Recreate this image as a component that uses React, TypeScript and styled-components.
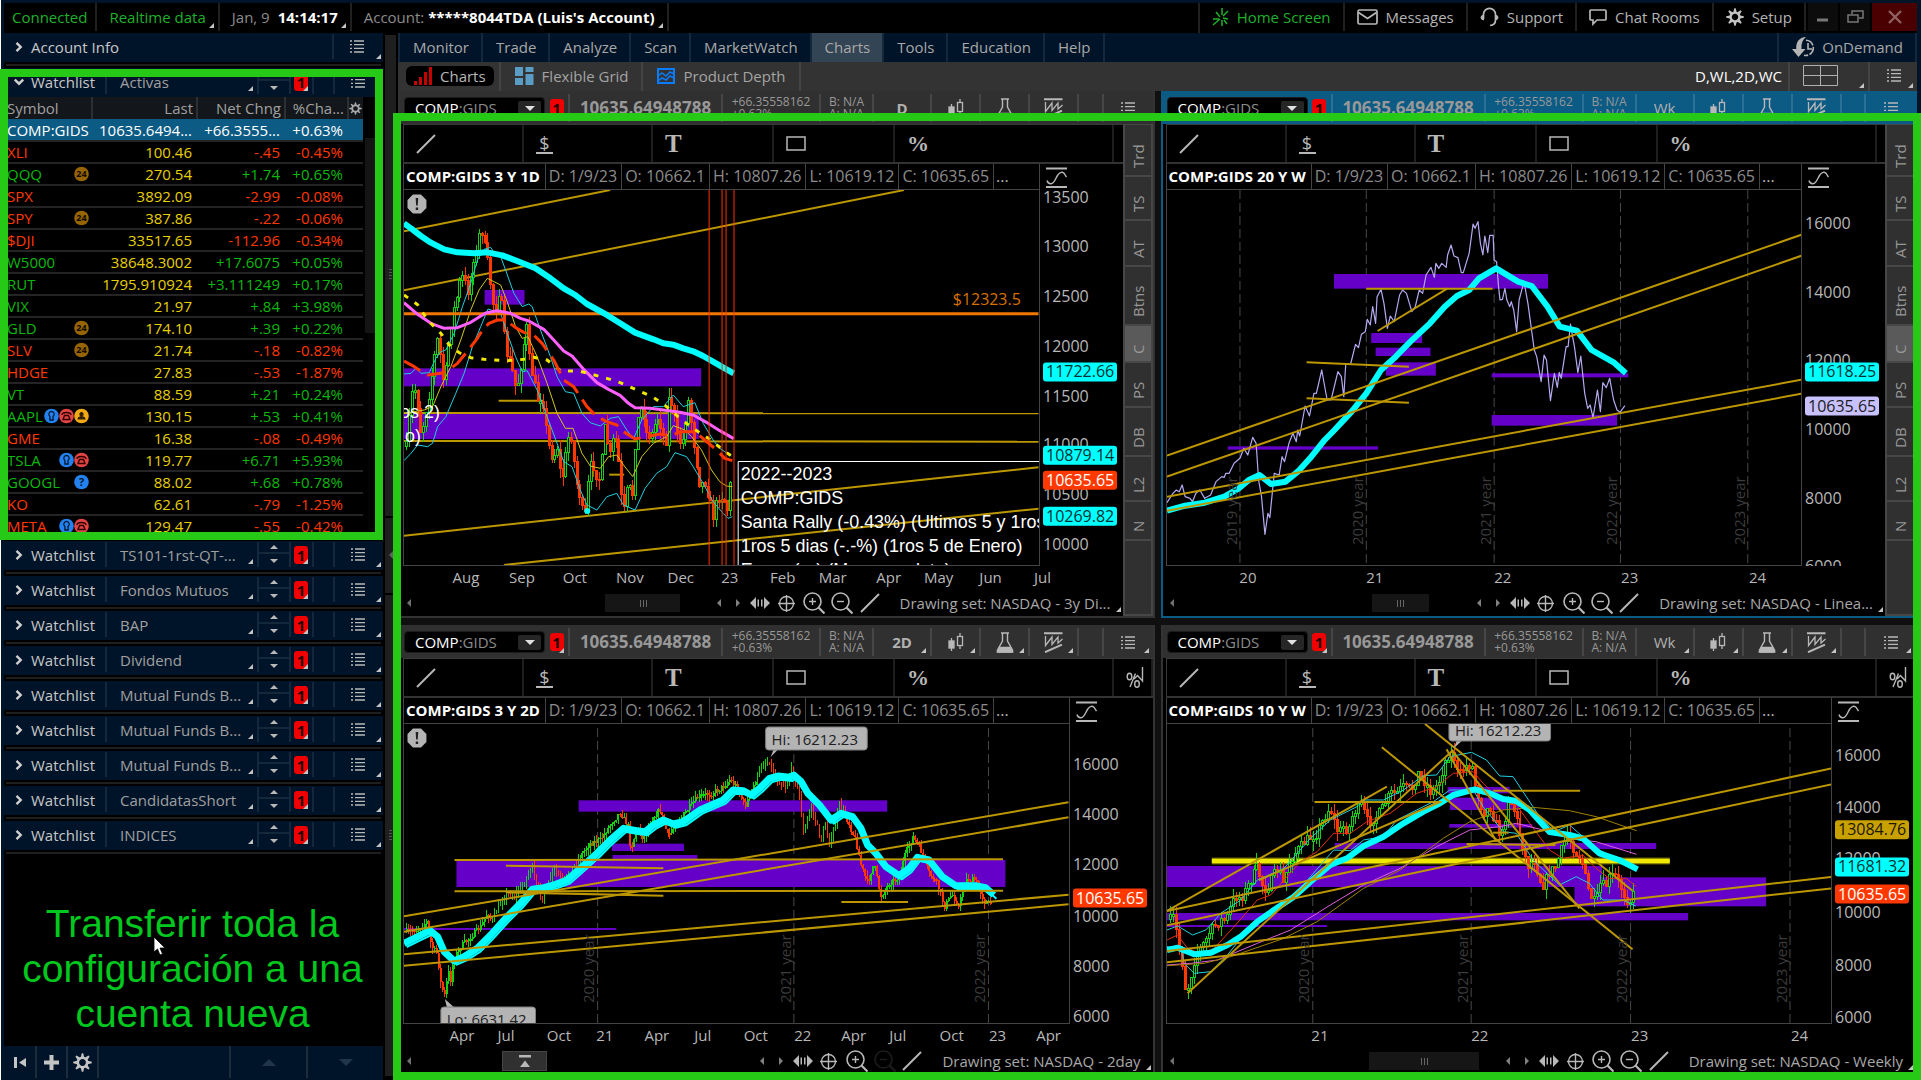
import React from "react";
import styled, { createGlobalStyle, css } from "styled-components";

const SANS = '"Open Sans", "Noto Sans", sans-serif';
const ARIAL = '"Liberation Sans", Arial, sans-serif';
const NAVY = "#001429";
const GREEN = "#26c916";
const GOLD = "#bd9700";
const PURPLE = "#6400c8";
const CYAN = "#00ffff";
const RED = "#ff3800";
const ICON = "#b8b8b8";

const Global = createGlobalStyle`
  * { box-sizing: border-box; }
  body { margin: 0; background: ${NAVY}; overflow: hidden; }
  button { font: inherit; color: inherit; background: none; border: 0; padding: 0; margin: 0; cursor: pointer; text-align: left; }
  svg { display: block; flex: none; }
`;

const App_ = styled.div`
  height: 100vh;
  display: flex;
  flex-direction: column;
  padding: 3px 4px 0 3px;
  border-left: 1px solid #fff;
  background: ${NAVY};
  color: #b4b4b4;
  font: 15px/20px ${SANS};
`;

const corner = css`
  position: relative;
  &::after {
    content: "";
    position: absolute;
    right: 4px;
    bottom: 3px;
    border-left: 5px solid transparent;
    border-bottom: 5px solid #c4c4c4;
  }
`;

/* ---------- top bar ---------- */
const TopBar = styled.header`
  display: flex;
  height: 30px;
  background: #000;
`;
const TopItem = styled.button<{ $green?: boolean; $corner?: boolean; $first?: boolean }>`
  display: flex;
  align-items: center;
  gap: 8px;
  height: 28px;
  padding: ${(p) => (p.$first ? "0 8px" : "0 12px")};
  border-right: 2px solid #202020;
  white-space: nowrap;
  color: ${(p) => (p.$green ? "#1fb02a" : "#b4b4b4")};
  ${(p) => p.$corner && corner}
`;
const Dim = styled.span`
  color: #8c8c8c;
`;
const Strong = styled.b`
  color: #fff;
`;
const Spacer = styled.div<{ $line?: string }>`
  flex: 1;
  border-right: ${(p) => (p.$line ? `2px solid ${p.$line}` : "0")};
`;
const WinButton = styled.button<{ $close?: boolean }>`
  display: grid;
  place-items: center;
  width: ${(p) => (p.$close ? 45 : 30)}px;
  height: 28px;
  margin-left: 2px;
  background: ${(p) => (p.$close ? "#4a0000" : "#0c0c0c")};
`;

/* ---------- body ---------- */
const Body = styled.div`
  flex: 1;
  min-height: 0;
  display: flex;
`;
const Side = styled.aside`
  width: 379px;
  flex: none;
  display: flex;
  flex-direction: column;
  background: #000;
`;
const Row = styled.div`
  height: 29px;
  flex: none;
  display: flex;
  align-items: center;
  padding-bottom: 2px;
  background: ${NAVY};
`;
const RowGap = styled.div`
  height: 6px;
  flex: none;
  padding: 2px 2px 0;
  &::before {
    content: "";
    display: block;
    height: 2px;
    background: #1f1f1f;
  }
`;
const cellLine = css`
  height: 25px;
  border-right: 2px solid #14283c;
`;
const Toggle = styled.button`
  display: flex;
  align-items: center;
  gap: 7px;
  padding-left: 10px;
  width: 103px;
  color: #c8c8c8;
  ${cellLine}
`;
const AccountToggle = styled(Toggle)`
  width: 330px;
`;
const NameCell = styled.button`
  width: 152px;
  padding-left: 13px;
  color: #a0a0a0;
  white-space: nowrap;
  ${cellLine}
  ${corner}
`;
const SpinCell = styled.div`
  width: 32px;
  display: grid;
  place-items: center;
  ${cellLine}
`;
const Spin = styled.button`
  display: grid;
  place-items: center;
  width: 30px;
  height: 12px;
  &:first-child {
    border-bottom: 2px solid #14283c;
  }
`;
const LinkCell = styled.button`
  width: 23px;
  display: flex;
  align-items: center;
  padding-left: 3px;
  ${cellLine}
  ${corner}
`;
const LinkBadge = styled.span`
  width: 14px;
  height: 18px;
  border-radius: 3px;
  background: #f00000;
  color: #200000;
  font: bold 15px/18px ${SANS};
  text-align: center;
`;
const BlankCell = styled.div`
  width: 21px;
  ${cellLine}
`;
const MenuCell = styled.button`
  flex: 1;
  height: 27px;
  display: flex;
  align-items: center;
  padding-left: 16px;
  ${corner}
  &::after {
    right: 2px;
    bottom: 1px;
  }
`;
const Framed = styled.section`
  position: relative;
  padding-bottom: 3px;
`;
const Frame = styled.div<{ $side?: boolean }>`
  position: absolute;
  inset: ${(p) => (p.$side ? "1px 0 1px -4px" : "22px -4px -4px -5px")};
  border: 8px solid ${GREEN};
  pointer-events: none;
  z-index: 2;
`;
const QuoteWrap = styled.div`
  display: flex;
`;
const Quotes = styled.table`
  flex: 1;
  table-layout: fixed;
  border-collapse: collapse;
`;
const Th = styled.th<{ $w: number; $left?: boolean }>`
  width: ${(p) => p.$w}px;
  height: 22px;
  padding: 0 3px;
  font-weight: 400;
  color: #a0a0a0;
  background: #13171b;
  border-right: 2px solid #2c3034;
  text-align: ${(p) => (p.$left ? "left" : "right")};
  &:last-child {
    border-right: 0;
    padding: 0;
  }
`;
const Tr = styled.tr<{ $on?: boolean }>`
  height: 22px;
  background: ${(p) => (p.$on ? "#0c5b84" : "#000")};
  border-bottom: 2px solid #242424;
`;
const tones = { r: "#ff3800", g: "#0cb80c", y: "#e8d000", w: "#ffffff" };
const Td = styled.td<{ $tone: keyof typeof tones; $left?: boolean }>`
  height: 22px;
  padding: 0 ${(p) => (p.$left ? 0 : 5)}px 0 ${(p) => (p.$left ? 3 : 0)}px;
  line-height: 18px;
  color: ${(p) => tones[p.$tone]};
  text-align: ${(p) => (p.$left ? "left" : "right")};
  white-space: nowrap;
`;
const Symbol_ = styled.div`
  display: flex;
  justify-content: space-between;
  align-items: center;
  padding-right: 3px;
`;
const Marks = styled.span`
  display: flex;
`;
const Track = styled.div`
  width: 20px;
  padding-top: 41px;
  padding-left: 2px;
`;
const Thumb = styled.div`
  height: 195px;
  background: #141414;
`;
const Note = styled.div`
  flex: 1;
  display: flex;
  align-items: flex-end;
  justify-content: center;
  position: relative;
  padding: 0 20px 10px 0;
`;
const NoteText = styled.p`
  margin: 0;
  padding-left: 18px;
  color: #00c81e;
  font: 39px/45px ${ARIAL};
  text-align: center;
`;
const Cursor = styled.svg`
  position: absolute;
  left: 149px;
  bottom: 90px;
`;
const Foot = styled.footer`
  height: 34px;
  flex: none;
  display: flex;
  background: ${NAVY};
`;
const FootCell = styled.button<{ $w: number }>`
  width: ${(p) => p.$w}px;
  height: 32px;
  display: grid;
  place-items: center;
  border-right: 2px solid #1b2c3d;
  &:last-child {
    flex: 1;
    border: 0;
  }
`;
const Splitter = styled.div`
  width: 15px;
  flex: none;
  padding: 2px 2px 4px;
  background: #000;
  display: flex;
  flex-direction: column;
  gap: 2px;
`;
const Bar = styled.div<{ $grow: number }>`
  flex: ${(p) => p.$grow};
  background: #1f1f1f;
  display: grid;
  place-items: center;
`;

/* ---------- work area ---------- */
const Work = styled.main`
  flex: 1;
  min-width: 0;
  display: flex;
  flex-direction: column;
`;
const Nav = styled.nav`
  height: 29px;
  flex: none;
  display: flex;
  background: ${NAVY};
  border-left: 2px solid #14283c;
`;
const Tab = styled.a<{ $on?: boolean }>`
  display: flex;
  align-items: center;
  gap: 6px;
  padding: 0 12px 2px 13px;
  border-right: 2px solid #14283c;
  color: #a8a8a8;
  text-decoration: none;
  background: ${(p) => (p.$on ? "#334454" : "none")};
`;
const Tools = styled.div`
  height: 29px;
  flex: none;
  display: flex;
  align-items: center;
  padding-left: 2px;
  background: #333;
`;
const ToolTab = styled.button<{ $on?: boolean }>`
  display: flex;
  align-items: center;
  height: 29px;
  padding: 0 5px 2px 6px;
  border-right: 2px solid #444;
`;
const Pill = styled.span<{ $on?: boolean }>`
  display: flex;
  align-items: center;
  gap: 8px;
  height: 20px;
  padding: 0 8px;
  border-radius: 6px;
  background: ${(p) => (p.$on ? "#000" : "none")};
  color: ${(p) => (p.$on ? "#b8b8b8" : "#a4a4a4")};
`;
const GridName = styled.button`
  height: 29px;
  padding: 0 6px 2px 5px;
  color: #fff;
  border-right: 2px solid #444;
`;
const GridPick = styled.button<{ $w: number }>`
  width: ${(p) => p.$w}px;
  height: 29px;
  display: flex;
  align-items: center;
  padding: 0 0 2px 13px;
  border-right: 2px solid #444;
  ${corner}
  &:last-child {
    border: 0;
    padding-left: 17px;
  }
`;
const Charts = styled.div`
  flex: 1;
  min-height: 0;
  position: relative;
  margin-bottom: 4px;
  display: grid;
  grid-template-columns: minmax(0, 1fr) minmax(0, 1fr);
  grid-template-rows: minmax(0, 527fr) minmax(0, 451fr);
  gap: 7px 6px;
  background: #101010;
`;

/* ---------- chart panel ---------- */
const Panel = styled.section<{ $active?: boolean }>`
  display: flex;
  flex-direction: column;
  min-width: 0;
  border: 2px solid ${(p) => (p.$active ? "#0c5b84" : "#333")};
  border-top: 0;
  background: #000;
`;
const Head = styled.div<{ $active?: boolean }>`
  height: 33px;
  flex: none;
  display: flex;
  align-items: center;
  padding: 2px 0 1px 4px;
  background: ${(p) => (p.$active ? "#0c5b84" : "#303030")};
  --line: ${(p) => (p.$active ? "#2b7095" : "#464646")};
`;
const Combo = styled.button`
  width: 141px;
  height: 22px;
  display: flex;
  align-items: center;
  justify-content: space-between;
  padding: 0 3px 0 10px;
  border: 1px solid #1c1c1c;
  border-radius: 4px;
  background: #000;
  color: #fff;
`;
const Drop = styled.span`
  width: 23px;
  height: 15px;
  display: grid;
  place-items: center;
  background: #262626;
  border-radius: 2px;
`;
const HeadCell = styled.div<{ $w?: number; $corner?: boolean }>`
  ${(p) => (p.$w ? `width: ${p.$w}px;` : "flex: 1;")}
  height: 28px;
  display: flex;
  align-items: center;
  justify-content: center;
  color: #989898;
  white-space: nowrap;
  border-right: 2px solid var(--line);
  ${(p) => p.$corner && corner}
  &:last-child {
    border: 0;
  }
`;
const Price = styled.b`
  font-size: 17px;
`;
const Small = styled.span`
  font-size: 12px;
  line-height: 12px;
  white-space: pre;
`;
const HeadButton = styled(HeadCell).attrs({ as: "button" })`
  color: #b0b0b0;
`;
const Mid = styled.div`
  flex: 1;
  min-height: 0;
  display: flex;
`;
const Center = styled.div`
  flex: 1;
  min-width: 0;
  display: flex;
  flex-direction: column;
  padding-left: 3px;
`;
const DrawBar = styled.div`
  height: 40px;
  flex: none;
  display: flex;
  border-top: 1px solid #3a3a3a;
  border-bottom: 2px solid #333;
  border-left: 1px solid #3a3a3a;
  overflow: hidden;
`;
const Draw = styled.button<{ $w: number }>`
  width: ${(p) => p.$w}px;
  flex: none;
  display: flex;
  align-items: center;
  padding-left: 12px;
  border-right: 2px solid #1e1e1e;
  color: ${ICON};
`;
const Serif = styled.span<{ $small?: boolean }>`
  font: bold ${(p) => (p.$small ? 22 : 25)}px/36px "Liberation Serif", serif;
`;
const DollarBox = styled.span`
  width: 17px;
  border-bottom: 2px solid ${ICON};
  font: 18px/18px ${SANS};
  text-align: center;
`;
const PlotGrid = styled.div`
  flex: 1;
  min-height: 0;
  display: grid;
  grid-template-columns: minmax(0, 1fr) 83px;
  grid-template-rows: 26px minmax(0, 1fr);
`;
const Info = styled.div`
  display: flex;
  overflow: hidden;
  border: solid #444;
  border-width: 0 1px 1px;
`;
const InfoCell = styled.span<{ $bold?: boolean }>`
  padding: ${(p) => (p.$bold ? "2px 5px 0 2px" : "2px 4px 0 3px")};
  border-right: 1px solid #444;
  white-space: nowrap;
  font-size: ${(p) => (p.$bold ? 15 : 16)}px;
  color: ${(p) => (p.$bold ? "#fff" : "#8c8c8c")};
  font-weight: ${(p) => (p.$bold ? 700 : 400)};
  &:last-child {
    border: 0;
    padding-left: 2px;
    color: #b4b4b4;
  }
`;
const AxisTop = styled.div`
  padding: 3px 0 0 6px;
`;
const Plot = styled.svg`
  width: 100%;
  height: 100%;
  min-height: 0;
  border: solid #444;
  border-width: 0 1px 1px;
  overflow: hidden;
  .geo * {
    vector-effect: non-scaling-stroke;
  }
`;
const Axis = styled.svg`
  width: 100%;
  height: 100%;
  overflow: hidden;
  font: 16px ${SANS};
  fill: #b8b8b8;
`;
const TimeAxis = styled.svg`
  width: 100%;
  height: 24px;
  font: 15px ${SANS};
  fill: #b8b8b8;
  text-anchor: middle;
`;
const ScrollRow = styled.div`
  height: 26px;
  flex: none;
  display: flex;
  align-items: center;
  padding-left: 4px;
  color: #a8a8a8;
`;
const ScrollTrack = styled.div`
  flex: 1;
  display: flex;
`;
const ScrollThumb = styled.div<{ $at: number; $w: number; $btn?: boolean }>`
  margin-left: ${(p) => p.$at}%;
  width: ${(p) => p.$w}px;
  height: 18px;
  display: grid;
  place-items: center;
  background: ${(p) => (p.$btn ? "#303030" : "#161616")};
  outline: ${(p) => (p.$btn ? "1px solid #444" : "0")};
`;
const Mini = styled.button<{ $w: number; $off?: boolean }>`
  width: ${(p) => p.$w}px;
  display: grid;
  place-items: center;
  opacity: ${(p) => (p.$off ? 0.15 : 1)};
`;
const SetName = styled.button`
  padding: 0 12px 0 16px;
  height: 24px;
  white-space: nowrap;
  ${corner}
  &::after {
    right: 2px;
  }
`;
const Tabs = styled.div`
  width: 30px;
  flex: none;
  display: flex;
  flex-direction: column;
  gap: 2px;
  background: #474747;
  padding: 1px 2px 2px 2px;
`;
const SideTab = styled.button<{ $h: number; $on?: boolean }>`
  height: ${(p) => p.$h}px;
  flex: none;
  writing-mode: vertical-rl;
  transform: rotate(180deg);
  padding-top: 7px;
  line-height: 26px;
  color: #989898;
  background: ${(p) => (p.$on ? "#5a5a5a" : "#303030")};
`;
const TabsRest = styled.div`
  flex: 1;
  background: #303030;
`;

/* ---------- icons ---------- */
const ListIcon = () => (
  <svg width="14" height="15" viewBox="0 0 14 15" stroke={ICON} strokeWidth="1.3">
    <path d="M0 2h2M0 5.7h2M0 9.3h2M0 13h2M4 2h10M4 5.7h10M4 9.3h10M4 13h10" />
  </svg>
);
const Chevron = ({ down }: { down?: boolean }) => (
  <svg width="10" height="12" viewBox="0 0 10 12" fill="none" stroke="#d0d0d0" strokeWidth="2.4">
    <path d={down ? "M0.8 3.5l4.2 4.2 4.2-4.2" : "M2.5 1.8l4.2 4.2-4.2 4.2"} />
  </svg>
);
const Tri = ({ d, s = 4, c = ICON }: { d: "u" | "d" | "l" | "r"; s?: number; c?: string }) => {
  const p = {
    u: `M0 ${s}h${2 * s}L${s} 0z`,
    d: `M0 0h${2 * s}L${s} ${s}z`,
    l: `M${s} 0v${2 * s}L0 ${s}z`,
    r: `M0 0v${2 * s}L${s} ${s}z`,
  }[d];
  const flat = d === "u" || d === "d";
  return (
    <svg width={flat ? 2 * s : s} height={flat ? s : 2 * s} fill={c}>
      <path d={p} />
    </svg>
  );
};
const Gear = ({ size = 18, c = "#c4c4c4" }: { size?: number; c?: string }) => (
  <svg width={size} height={size} viewBox="-9 -9 18 18" fill="none" stroke={c}>
    <circle r="4.4" strokeWidth="2.4" />
    {[0, 45, 90, 135, 180, 225, 270, 315].map((a) => (
      <path key={a} d="M-1.6 -5h3.2L0.7 -8.8h-1.4z" fill={c} stroke="none" transform={`rotate(${a})`} />
    ))}
  </svg>
);
const Burst = () => (
  <svg width="17" height="20" viewBox="0 0 17 20" fill="none" stroke="#1fb02a" strokeWidth="1.5">
    <path d="M10 1v7M16 4l-5 5M4 5l4 5M16 12l-5-1M1 12h6M1 18l7-6M10 13v6M12 13l3 4" />
  </svg>
);
const Mail = () => (
  <svg width="21" height="16" viewBox="0 0 21 16" fill="none" stroke="#b8b8b8" strokeWidth="1.7">
    <rect x="1" y="1" width="19" height="14" rx="1.5" />
    <path d="M1.5 3.5l9 6 9-6" />
  </svg>
);
const Headset = () => (
  <svg width="19" height="20" viewBox="0 0 19 20" fill="none" stroke="#b8b8b8" strokeWidth="1.7">
    <path d="M3.5 12V7.500a6 6.200 0 0 1 12 0V13q0 5-5.500 5.500" />
    <path d="M3.500 8q-2.500.5-2.500 2.500t2.500 2.500zM15.500 8q2.500.5 2.500 2.500t-2.500 2.500z" fill="#b8b8b8" strokeWidth="1" />
  </svg>
);
const Chat = () => (
  <svg width="18" height="17" viewBox="0 0 18 17" fill="none" stroke="#b8b8b8" strokeWidth="1.7">
    <path d="M2 1h14q1 0 1 1v8q0 1-1 1H8l-4 4v-4H2q-1 0-1-1V2q0-1 1-1z" />
  </svg>
);
const BarsIcon = () => (
  <svg width="18" height="18" viewBox="0 0 18 18" fill="#c80000">
    <path d="M0 14h3v4H0zM5 10h3v8H5zM10 5h3v13h-3zM15 0h3v18h-3z" />
  </svg>
);
const FlexIcon = () => (
  <svg width="19" height="18" viewBox="0 0 19 18" fill="#5b9cc4">
    <path d="M0 0h8v9H0zM0 11h8v7H0zM10.500 0h8v5h-8zM10.500 7h8v11h-8z" />
  </svg>
);
const DepthIcon = () => (
  <svg width="18" height="16" viewBox="0 0 18 16" fill="none" stroke="#0a7cff" strokeWidth="2">
    <rect x="1" y="1" width="16" height="14" />
    <path d="M1 8l4-3 4 3 4-4 4 2M1 13l4-3 4 2 4-4 4 2" strokeWidth="1.500" />
  </svg>
);
const FourGrid = () => (
  <svg width="35" height="21" viewBox="0 0 35 21" fill="none" stroke="#b0b0b0">
    <path d="M.5.5h34v20H.5zM17.500 0v21M0 10.500h35" />
  </svg>
);
const OnDemandIcon = () => (
  <svg width="24" height="20" viewBox="0 0 24 20" fill="none" stroke="#b4b4b4" strokeWidth="1.6">
    <path d="M14 0C7 .5 3.800 5 4.300 12H0l6.500 8 7-8H9.500C9 6.500 10.500 2.500 14 0z" fill="#b4b4b4" stroke="none" />
    <path d="M14 3.300a7.600 7.600 0 1 1-2 15" strokeDasharray="9 1.500" />
    <path d="M16 6v6h4" />
  </svg>
);
const CandleIcon = () => (
  <svg width="16" height="18" viewBox="0 0 16 18" fill="none" stroke={ICON} strokeWidth="1.3">
    <path d="M3.500 5v13M12 0v3M12 13v3" />
    <rect x="1" y="8" width="5" height="7" fill={ICON} />
    <rect x="9.500" y="3.500" width="5" height="9" />
  </svg>
);
const Flask = () => (
  <svg width="18" height="21" viewBox="0 0 18 21" fill="none" stroke={ICON} strokeWidth="1.4">
    <path d="M5 1h8M6.500 1v8L1.500 18q-.8 2 1 2h13q1.800 0 1-2L11.500 9V1" />
    <path d="M3.500 15.500h11l2 4.500h-15z" fill={ICON} />
  </svg>
);
const PatternIcon = () => (
  <svg width="19" height="21" viewBox="0 0 19 21" fill="none" stroke={ICON} strokeWidth="1.3">
    <path d="M0 1.200h18.500M1 20.200l17-7.500" strokeWidth="2" />
    <path d="M1.500 4v9.500L8 5v7.500L14 5v6l4.500-4" />
  </svg>
);
const ScaleIcon = () => (
  <svg width="22" height="22" viewBox="0 0 22 22" fill="none" stroke={ICON} strokeWidth="1.4">
    <path d="M0 1.500h21M0 20h21" strokeWidth="2.200" />
    <path d="M1 13.500q1 3.500 4 3.200c4-.5 4.500-6 7-9q3-4 6-1.500l2.500 4" />
  </svg>
);
const LineIcon = () => (
  <svg width="20" height="20" viewBox="0 0 20 20" stroke={ICON} strokeWidth="2">
    <path d="M1 19L19 1" />
  </svg>
);
const PctChart = () => (
  <svg width="19" height="22" viewBox="0 0 19 22" fill="none" stroke={ICON} strokeWidth="1.400">
    <ellipse cx="3.500" cy="9.500" rx="2.300" ry="3.300" />
    <ellipse cx="11" cy="17" rx="2.300" ry="3.300" />
    <path d="M9.500 6.500L4 20M8 12l3.500-3.500 5 5.500V0" />
  </svg>
);
const Zoom = ({ plus }: { plus?: boolean }) => (
  <svg width="22" height="22" viewBox="0 0 22 22" fill="none" stroke={ICON} strokeWidth="1.600">
    <circle cx="9.500" cy="9.500" r="8.500" />
    <path d={plus ? "M6 9.500h7M9.500 6v7" : "M6 9.500h7"} strokeWidth="1.400" />
    <path d="M15.500 15.500l6 6" strokeWidth="2.200" />
  </svg>
);
const Cross = () => (
  <svg width="17" height="17" viewBox="0 0 17 17" fill="none" stroke={ICON} strokeWidth="1.400">
    <circle cx="8.500" cy="8.500" r="7" />
    <path d="M0 8.500h17M8.500 0v17" />
  </svg>
);
const Stretch = () => (
  <svg width="20" height="12" viewBox="0 0 20 12" fill={ICON}>
    <path d="M0 6l6-6v12zM20 6l-6-6v12zM7.500 2.500h1.500v7H7.500zM11 2.500h1.500v7H11z" />
  </svg>
);
const Grip = () => (
  <svg width="8" height="7" stroke="#666" strokeWidth="1">
    <path d="M1.500 0v7M4.500 0v7M7.500 0v7" />
  </svg>
);
const ToTop = () => (
  <svg width="12" height="12" fill={ICON}>
    <path d="M0 0h12v2.500H0zM1 12h10L6 5.500z" />
  </svg>
);
const Mark = ({ k }: { k: string }) => {
  const bg = { n: "#966400", b: "#2482f0", p: "#e24444", u: "#f0a814", q: "#2482f0" }[k];
  return (
    <svg width="15" height="16" viewBox="0 0 15 16">
      <circle cx="7.500" cy="8" r="7.300" fill={bg} />
      {k === "n" && <text x="7.500" y="11" fontSize="9" fontWeight="700" textAnchor="middle" fill="#100a00">24</text>}
      {k === "q" && <text x="7.500" y="12" fontSize="11" fontWeight="700" textAnchor="middle" fill="#001830">?</text>}
      {k === "b" && <path d="M7.500 3.300a2.900 2.900 0 0 1 1.600 5.200V12H5.900V8.500a2.900 2.900 0 0 1 1.600-5.200z" fill="none" stroke="#001830" strokeWidth="1.300" />}
      {k === "p" && <path d="M3 7q0-2.500 4.500-2.500T12 7M4 11.500L5.500 7.500h4L11 11.500z" fill="none" stroke="#300" strokeWidth="1.400" />}
      {k === "u" && <path d="M7.500 4a2 2.200 0 0 1 1 4.200q3 .6 3 3.300h-8q0-2.700 3-3.300A2 2.200 0 0 1 7.500 4z" fill="#302000" />}
    </svg>
  );
};

/* ---------- data ---------- */
type Quote = [string, string, string, string, string, string];
const quotes: Quote[] = [
  ["COMP:GIDS", "", "10635.6494...", "+66.3555...", "+0.63%", "w"],
  ["XLI", "", "100.46", "-.45", "-0.45%", "r"],
  ["QQQ", "n", "270.54", "+1.74", "+0.65%", "g"],
  ["SPX", "", "3892.09", "-2.99", "-0.08%", "r"],
  ["SPY", "n", "387.86", "-.22", "-0.06%", "r"],
  ["$DJI", "", "33517.65", "-112.96", "-0.34%", "r"],
  ["W5000", "", "38648.3002", "+17.6075", "+0.05%", "g"],
  ["RUT", "", "1795.910924", "+3.111249", "+0.17%", "g"],
  ["VIX", "", "21.97", "+.84", "+3.98%", "g"],
  ["GLD", "n", "174.10", "+.39", "+0.22%", "g"],
  ["SLV", "n", "21.74", "-.18", "-0.82%", "r"],
  ["HDGE", "", "27.83", "-.53", "-1.87%", "r"],
  ["VT", "", "88.59", "+.21", "+0.24%", "g"],
  ["AAPL", "bpu", "130.15", "+.53", "+0.41%", "g"],
  ["GME", "", "16.38", "-.08", "-0.49%", "r"],
  ["TSLA", "bp", "119.77", "+6.71", "+5.93%", "g"],
  ["GOOGL", "q", "88.02", "+.68", "+0.78%", "g"],
  ["KO", "", "62.61", "-.79", "-1.25%", "r"],
  ["META", "bp", "129.47", "-.55", "-0.42%", "r"],
];
const lists = ["TS101-1rst-QT-...", "Fondos Mutuos", "BAP", "Dividend", "Mutual Funds B...", "Mutual Funds B...", "Mutual Funds B...", "CandidatasShort", "INDICES"];

type Shape =
  | { t: "r"; b: number[]; c?: string }
  | { t: "l"; p: string; c: string; w: number; dash?: string; dx?: number; dy?: number }
  | { t: "k"; p: string; step: number; solid?: boolean };

const rects = (...b: number[][]): Shape[] => b.map((x) => ({ t: "r", b: x }));
const golds = (...p: string[]): Shape[] => p.map((x) => ({ t: "l", p: x, c: GOLD, w: 2 }));
const line = (c: string, w: number, p: string, dash?: string): Shape => ({ t: "l", p, c, w, dash });

const parse = (s: string) => s.trim().split(/\s+/).map((q) => q.split(",").map(Number));

/* Open/close bars along a price path; wicks vary with a fixed sequence. */
const Candles = ({ p, step, solid }: { p: string; step: number; solid?: boolean }) => {
  const pts = parse(p);
  const at = (x: number) => {
    let i = 0;
    while (i < pts.length - 2 && pts[i + 1][0] < x) i++;
    const [x0, y0] = pts[i];
    const [x1, y1] = pts[i + 1];
    return y0 + ((y1 - y0) * (x - x0)) / (x1 - x0);
  };
  let seed = 7;
  const rnd = () => ((seed = (seed * 16807) % 2147483647) / 2147483647);
  const out: React.ReactNode[] = [];
  const amp = solid ? 18 : 30;
  const w = solid ? 5 : 6;
  let prev = at(pts[0][0]);
  for (let x = pts[0][0]; x <= pts[pts.length - 1][0]; x += step) {
    const close = at(x) + (rnd() - 0.5) * amp;
    const top = Math.min(prev, close);
    const h = Math.max(5, Math.abs(prev - close));
    const up = close < prev;
    const c = up ? "#14d214" : RED;
    out.push(
      <path key={x} d={`M${x} ${top - rnd() * amp}V${top}M${x} ${top + h}v${rnd() * amp}`} stroke={c} strokeWidth="1" />,
      <rect key={`b${x}`} x={x - w / 2} y={top} width={w} height={h} fill={up && !solid ? "#000" : c} stroke={c} strokeWidth={solid ? 0 : 1} />
    );
    prev = close;
  }
  return <g shapeRendering="crispEdges">{out}</g>;
};

const Draws = ({ shapes }: { shapes: Shape[] }) => (
  <>
    {shapes.map((s, i) =>
      s.t === "r" ? (
        <rect key={i} x={s.b[0]} y={s.b[1]} width={s.b[2] - s.b[0]} height={s.b[3] - s.b[1]} fill={s.c ?? PURPLE} />
      ) : s.t === "l" ? (
        <polyline key={i} points={s.p} fill="none" stroke={s.c} strokeWidth={s.w} strokeDasharray={s.dash} strokeLinejoin="round" transform={s.dx ? `translate(${s.dx} ${s.dy})` : undefined} />
      ) : (
        <Candles key={i} p={s.p} step={s.step} solid={s.solid} />
      )
    )}
  </>
);

const Alert = () => (
  <g transform="translate(13 14)">
    <path d="M-4 -9.500h8l5.500 5.500v8l-5.500 5.500h-8l-5.500-5.500v-8z" fill="#b4b4b4" />
    <path d="M-1.300 -6h2.600l-.5 7.500h-1.600zM-1.200 3.500h2.400v2.500h-2.400z" fill="#202020" />
  </g>
);
const Year = ({ x, y, n }: { x: number; y: number; n: number }) => (
  <text transform={`translate(${x} ${y}) rotate(-90)`} fontFamily={SANS} fontSize="15" fill="#3c3c3c">{`${n} year`}</text>
);

const red3 = "M958 90V1215M997 90V1215M1009 90V1215M1033 90V1215";
const tl: Shape[] = [
  ...rects([282, 390, 402, 434], [39, 625, 934, 679], [39, 757, 927, 837]),
  ...golds("39,214 660,90", "39,391 1545,90", "39,1127 1950,922", "340,1215 1950,1046", "39,759 1950,760", "39,843 1950,845", "324,722 460,722", "657,944 702,944"),
  { t: "k", step: 8.4, p: "48,860 58,760 68,670 80,720 92,830 103,770 118,690 130,600 142,530 152,610 160,680 172,570 185,470 200,410 212,345 225,370 236,400 247,300 258,280 266,225 275,215 284,265 296,330 306,430 318,440 330,370 337,500 350,580 362,610 378,690 388,650 396,590 405,520 412,490 418,600 430,660 445,730 456,700 466,790 478,870 490,900 500,850 515,970 525,900 540,800 550,890 560,970 575,1030 583,1100 590,1000 605,900 617,940 630,960 645,800 660,890 672,830 683,850 692,1000 703,1050 715,970 728,1010 735,870 745,780 757,730 770,820 785,830 803,770 815,800 828,860 838,710 850,740 865,850 880,840 897,720 910,830 920,900 932,980 945,960 958,1010 972,1070 985,1010 1000,1010 1015,1050 1024,960 1030,950" },
  line("#20d0e0", 1, "39,642 60,640 75,625 90,640 115,638 135,595 150,575 165,570 190,520 215,440 240,370 260,300 280,268 300,262 315,285 330,290 345,330 370,400 395,440 415,432 425,440 450,510 480,590 500,650 525,695 550,700 575,760 600,788 630,798 660,775 685,770 710,810 730,837 755,780 790,740 820,740 850,705 880,740 915,728 940,790 970,840 990,865 1025,888"),
  line("#20d0e0", 1, "39,902 60,880 80,855 110,860 125,850 140,800 165,770 195,700 220,640 245,560 270,500 292,447 330,460 350,520 375,590 395,635 410,632 440,690 470,770 500,850 520,905 545,920 570,990 590,1035 620,1050 650,1010 680,1000 700,1035 735,1050 765,985 800,940 830,920 855,878 890,890 910,920 940,970 970,1025 1000,1060 1015,1075 1028,1070"),
  line("#d0c820", 1, "39,760 100,750 125,740 150,680 180,620 210,540 240,450 265,390 290,355 330,375 350,425 375,500 395,535 412,530 440,590 470,670 500,760 525,805 548,805 575,880 600,918 630,925 655,890 680,885 700,915 728,950 755,890 790,850 830,830 850,797 885,810 905,830 935,870 965,930 990,965 1010,978 1028,980"),
  line("#f07800", 3, "39,461 1950,461"),
  line("#ff60ff", 3, "39,428 80,463 120,490 160,505 200,503 240,487 285,459 320,452 360,460 390,475 415,483 460,508 490,540 520,573 545,588 580,628 620,668 655,688 690,706 715,730 735,743 780,745 820,750 870,757 910,765 950,787 990,812 1032,836"),
  line("#f0e800", 3, "39,405 80,434 110,480 150,520 175,555 205,578 240,593 280,598 350,602 400,598 430,592 470,600 510,632 570,634 650,655 690,668 740,690 790,712 830,740 870,775 910,805 960,838 1000,870 1025,888", "5 8"),
  line(RED, 3, "39,603 70,620 85,630 110,645 150,640 180,625 200,610 225,580 260,535 275,510 295,490 320,480 345,480 375,503 400,517 430,525 455,550 490,600 520,660 550,680 570,710 590,740 620,770 650,785 680,795 700,815 735,837 770,830 810,822 845,828 870,815 915,815 945,840 980,870 1005,895 1028,902", "19 8"),
  line(CYAN, 6, "39,190 60,205 90,228 120,248 160,268 200,277 250,280 290,277 335,286 380,303 435,325 480,355 520,385 555,405 590,432 650,465 690,490 735,518 790,538 820,550 850,554 880,565 910,574 940,588 975,608 1005,625 1032,640"),
];
const tr: Shape[] = [
  ...rects([374, 342, 811, 386], [450, 519, 554, 549], [459, 563, 571, 588], [480, 607, 582, 647], [696, 640, 975, 652], [696, 765, 952, 797], [157, 859, 464, 869]),
  line("#b4aaf0", 1.2, "33,1028 45,1000 52,990 58,995 64,975 70,1010 80,1015 85,1025 92,1000 100,990 110,1015 122,1005 133,965 145,950 150,952 153,940 160,940 170,910 182,895 190,865 198,885 208,832 215,850 220,960 226,1010 233,1123 239,1060 243,1073 252,940 262,945 268,890 273,905 282,850 290,820 297,845 300,810 304,828 315,738 324,768 333,700 338,700 349,630 360,720 368,720 382,635 389,650 394,710 398,612 408,612 418,553 424,563 430,523 438,515 442,478 448,495 453,440 459,490 462,410 470,388 476,430 483,505 489,468 497,485 508,405 514,390 522,400 533,455 540,440 548,390 555,400 562,345 572,322 579,352 582,310 588,325 594,310 603,322 606,285 613,255 619,288 627,293 634,338 638,338 650,280 658,192 662,205 668,185 673,250 678,285 682,228 688,278 692,226 699,226 701,300 706,305 710,380 713,420 718,418 723,385 727,420 733,440 736,425 741,450 747,515 752,420 762,365 770,430 783,570 788,590 797,665 803,585 808,600 816,722 824,640 830,682 834,637 838,655 848,560 852,560 857,492 860,520 865,560 872,638 878,588 886,700 892,745 897,735 903,773 912,690 918,755 923,668 930,683 937,655 945,720 952,750 958,757 968,737"),
  line(CYAN, 6, "33,1052 70,1037 110,1028 150,1010 180,985 200,960 222,945 245,972 275,965 300,935 325,895 355,840 375,810 410,755 440,700 470,630 500,590 530,545 570,490 600,440 625,408 650,390 670,355 705,325 750,365 778,378 810,440 835,500 870,512 900,570 945,607 970,640"),
  ...golds("440,386 698,386", "463,513 606,385", "318,607 527,620", "318,715 527,728", "33,887 1329,224", "33,950 1329,287", "33,1010 1329,659", "33,1052 1329,701"),
];
const blPath = "39,970 80,950 118,932 140,950 160,995 190,1023 220,1010 260,985 300,945 345,895 390,850 425,808 460,803 490,795 530,780 570,745 620,700 660,660 700,625 740,632 765,635 790,615 820,600 850,612 880,605 930,570 1000,540 1030,510 1060,512 1085,525 1110,505 1140,475 1165,468 1200,472 1213,465 1235,485 1255,520 1290,555 1325,600 1355,580 1390,590 1415,625 1435,675 1460,700 1490,740 1530,767 1560,745 1585,712 1620,720 1660,770 1700,797 1760,797 1790,803 1815,825";
const bl: Shape[] = [
  ...rects([565, 541, 1494, 575], [665, 671, 882, 693], [667, 705, 922, 718], [197, 720, 1850, 801], [39, 924, 678, 930]),
  { t: "k", step: 6, solid: true, p: "48,935 75,930 110,905 122,980 140,1000 150,1090 163,1130 172,1050 180,1080 188,1020 210,980 240,950 270,920 290,880 305,900 330,850 350,820 370,830 400,790 425,735 435,800 458,830 490,745 515,790 540,750 570,710 600,670 630,660 660,615 690,575 715,620 722,690 740,625 760,655 790,590 810,570 835,650 850,620 885,580 925,530 965,520 1000,500 1020,478 1045,505 1065,560 1090,500 1120,430 1140,425 1160,480 1190,500 1205,450 1213,460 1230,530 1242,640 1265,560 1295,660 1310,610 1322,680 1350,555 1375,600 1400,660 1415,730 1435,790 1455,730 1475,830 1500,790 1530,770 1550,700 1572,650 1600,700 1620,760 1645,790 1668,860 1690,820 1710,860 1730,780 1760,780 1790,850 1810,850" },
  line(CYAN, 7, blPath),
  { t: "l", p: blPath, c: CYAN, w: 2, dx: 8, dy: 11 },
  ...golds("191,720 1843,718", "191,814 1843,812", "346,737 820,745", "346,817 820,827", "39,889 2040,547", "39,935 2040,592", "39,1003 2040,824", "39,1037 2040,853", "1356,846 1557,846"),
];
const br: Shape[] = [
  ...rects([48, 738, 1358, 801], [1275, 772, 1852, 859], [48, 879, 1617, 901], [48, 915, 530, 921], [553, 669, 1521, 687], [893, 501, 1080, 520], [900, 533, 1110, 570], [898, 612, 1148, 623]),
  { t: "r", b: [183, 713, 1562, 733], c: "#908800" },
  { t: "r", b: [183, 717, 1562, 729], c: "#f0e800" },
  { t: "k", step: 9, p: "58,900 70,890 78,950 86,990 96,1040 104,1110 112,1100 122,1060 135,1000 150,985 165,960 180,930 210,900 225,900 240,860 255,825 270,835 290,800 320,740 335,790 350,810 370,770 385,740 400,790 420,720 440,695 470,660 500,640 520,600 540,560 552,600 565,640 580,620 595,630 610,580 635,555 655,610 680,590 700,560 720,520 740,520 760,500 785,510 805,460 820,480 845,520 870,480 890,410 910,400 925,470 945,440 965,430 975,490 1000,580 1020,560 1045,630 1055,650 1075,540 1090,560 1115,650 1135,740 1155,720 1180,800 1200,760 1220,740 1255,640 1280,700 1295,710 1320,820 1340,850 1355,790 1370,800 1385,765 1400,770 1425,820 1440,850 1455,820" },
  line("#20d0e0", 1, "48,930 80,918 125,945 165,930 210,880 270,840 320,780 400,745 480,655 540,600 620,560 640,540 700,540 760,510 820,467 860,465 900,410 965,397 1010,420 1050,468 1090,470 1130,530 1170,590 1215,635 1260,615 1300,650 1350,690 1400,715 1465,745"),
  line("#20d0e0", 1, "48,980 90,985 100,1030 130,1060 180,1055 230,1005 290,930 380,855 420,840 480,770 550,690 600,692 640,660 700,650 740,600 850,545 900,510 970,510 1000,560 1060,635 1100,640 1150,720 1230,795 1280,770 1320,790 1360,840 1420,840 1460,858"),
  line("#e03010", 1, "48,960 80,945 110,985 150,1000 190,985 250,920 320,840 360,825 450,725 500,695 550,640 600,640 650,605 720,580 800,520 860,500 910,460 970,455 1000,490 1050,540 1090,540 1140,610 1200,690 1240,715 1300,705 1340,745 1380,775 1430,775 1462,800"),
  line("#e060e0", 1, "48,1035 120,1030 200,1020 320,970 420,930 540,855 640,795 750,745 860,680 960,630 1050,620 1100,610 1200,635 1290,660 1340,665 1462,703"),
  line("#a08000", 1, "48,1037 160,1030 240,1010 400,955 500,905 640,805 750,750 880,655 960,605 1060,570 1150,562 1260,572 1340,590 1462,632"),
  line(CYAN, 6, "48,990 80,983 130,1003 180,998 230,975 270,950 320,905 370,870 430,830 480,785 540,735 590,715 640,678 700,650 760,610 820,575 870,550 910,525 975,508 1020,520 1060,537 1100,543 1140,570 1200,636 1260,645 1300,655 1350,700 1410,720 1465,748"),
  ...golds("492,546 875,546", "1030,512 1292,512", "950,672 1218,675", "1030,638 1077,638", "48,873 2050,445", "48,916 2050,493", "48,993 2050,771", "48,1027 2050,805", "48,873 710,500", "110,1120 910,390", "325,780 870,546", "825,312 1450,812", "695,382 1450,988", "905,390 1290,865", "890,388 1040,665"),
];

type Chart = {
  title: string;
  agg: string;
  bold?: boolean;
  active?: boolean;
  tabs?: boolean;
  w: number;
  h: number;
  geo: string;
  shapes: Shape[];
  grid: number[];
  extra: React.ReactNode;
  ticks: [string, number][];
  tags: [string, number, string, string][];
  times: [string, number][];
  full: number;
  thumb: [number, number];
  thumbButton?: boolean;
  set: string;
};

const Bubble = ({ x, y, s, tip }: { x: number; y: number; s: string; tip: string }) => (
  <g>
    <path d={tip} fill="#b4b4b4" />
    <rect x={x} y={y} width={s.length > 11 ? 102 : 95} height="23" rx="3" fill="#b4b4b4" stroke="#808080" />
    <text x={x + 6} y={y + 18} fontFamily={SANS} fontSize="15" fill="#202020">{s}</text>
  </g>
);

const charts: Chart[] = [
  {
    title: "COMP:GIDS 3 Y 1D", agg: "D", bold: true, tabs: true, w: 637, h: 375,
    geo: "scale(.33333) translate(-39 -90)", shapes: tl, grid: [],
    extra: (
      <>
        <Alert />
        <text x="551" y="115" fontFamily={SANS} fontSize="16" fill="#d87000">$12323.5</text>
        <g fontFamily={ARIAL} fontSize="18" fill="#fff">
          <text x="36" y="228" textAnchor="end">os 2)</text>
          <text x="17" y="252" textAnchor="end">o)</text>
          <text x="338" y="290">2022--2023</text>
          <text x="338" y="314">COMP:GIDS</text>
          <text x="338" y="338">Santa Rally (-0.43%) (Ultimos 5 y 1ros</text>
          <text x="338" y="362">1ros 5 dias (-.-%) (1ros 5 de Enero)</text>
          <text x="338" y="386">Enero (-.-) (Mes completo)</text>
        </g>
        <path d="M335.500 380V271.500H640" fill="none" stroke="#fff" />
        <circle cx="184" cy="321" r="3" fill={CYAN} />
        <g transform="scale(.33333) translate(-39 -90)">
          <path d={red3} stroke="#ff3000" strokeWidth="3" />
        </g>
      </>
    ),
    ticks: [["13500", 8], ["13000", 57], ["12500", 107], ["12000", 157], ["11500", 206], ["11000", 254], ["10500", 304], ["10000", 354]],
    tags: [["11722.66", 182, CYAN, "#003030"], ["10879.14", 265, CYAN, "#003030"], ["10635.65", 290, RED, "#fff"], ["10269.82", 326, CYAN, "#003030"]],
    times: [["Aug", 63], ["Sep", 119], ["Oct", 172], ["Nov", 227], ["Dec", 278], ["23", 327], ["Feb", 380], ["Mar", 430], ["Apr", 486], ["May", 536], ["Jun", 588], ["Jul", 640]],
    full: 720, thumb: [65, 75], set: "Drawing set: NASDAQ - 3y Di...",
  },
  {
    title: "COMP:GIDS 20 Y W", agg: "Wk", active: true, tabs: true, w: 637, h: 375,
    geo: "scale(.49164 .33333) translate(-33 -90)", shapes: tr, grid: [182, 440, 701, 959, 1219],
    extra: (
      <>
        <Year x={70} y={355} n={2019} />
        <Year x={197} y={355} n={2020} />
        <Year x={325} y={355} n={2021} />
        <Year x={452} y={355} n={2022} />
        <Year x={580} y={355} n={2023} />
      </>
    ),
    ticks: [["16000", 34], ["14000", 103], ["12000", 171], ["10000", 239], ["8000", 308], ["6000", 376]],
    tags: [["11618.25", 182, CYAN, "#003030"], ["10635.65", 216, "#c8c0ff", "#202020"]],
    times: [["20", 82], ["21", 209], ["22", 337], ["23", 464], ["24", 592]],
    full: 720, thumb: [67, 57], set: "Drawing set: NASDAQ - Linea...",
  },
  {
    title: "COMP:GIDS 3 Y 2D", agg: "2D", bold: true, w: 667, h: 299,
    geo: "scale(.33333) translate(-39 -312)", shapes: bl, grid: [622, 1213, 1799],
    extra: (
      <>
        <Year x={191} y={279} n={2020} />
        <Year x={388} y={279} n={2021} />
        <Year x={583} y={279} n={2022} />
        <Alert />
        <Bubble x={363} y={3} s="Hi: 16212.23" tip="M368 33l4-10h6z" />
        <Bubble x={37} y={283} s="Lo: 6631.42" tip="M41 275l2 8h7z" />
      </>
    ),
    ticks: [["16000", 41], ["14000", 91], ["12000", 141], ["10000", 192], ["8000", 242], ["6000", 292]],
    tags: [["10635.65", 174, RED, "#fff"]],
    times: [["Apr", 59], ["Jul", 103], ["Oct", 156], ["21", 202], ["Apr", 254], ["Jul", 300], ["Oct", 353], ["22", 400], ["Apr", 451], ["Jul", 495], ["Oct", 549], ["23", 595], ["Apr", 646]],
    full: 750, thumb: [27, 43], thumbButton: true, set: "Drawing set: NASDAQ - 2day",
  },
  {
    title: "COMP:GIDS 10 Y W", agg: "Wk", w: 667, h: 299,
    geo: "scale(.33333) translate(-48 -312)", shapes: br, grid: [487, 964, 1444, 1924],
    extra: (
      <>
        <Year x={143} y={279} n={2020} />
        <Year x={302} y={279} n={2021} />
        <Year x={462} y={279} n={2022} />
        <Year x={622} y={279} n={2023} />
        <Bubble x={283} y={-6} s="Hi: 16212.23" tip="M288 24l3-8h6z" />
      </>
    ),
    ticks: [["16000", 32], ["14000", 84], ["12000", 135], ["10000", 188], ["8000", 241], ["6000", 293]],
    tags: [["13084.76", 106, "#c8a000", "#201800"], ["11681.32", 143, CYAN, "#003030"], ["10635.65", 170, RED, "#fff"]],
    times: [["21", 154], ["22", 314], ["23", 474], ["24", 634]],
    full: 750, thumb: [60, 110], set: "Drawing set: NASDAQ - Weekly",
  },
];

const tabDefs: [string, number][] = [["Trd", 50], ["TS", 42], ["AT", 44], ["Btns", 57], ["C", 35], ["PS", 43], ["DB", 47], ["L2", 43], ["N", 37]];

const ChartPanel = ({ c }: { c: Chart }) => (
  <Panel $active={c.active}>
    <Head $active={c.active}>
      <Combo aria-label="Symbol">
        <span>COMP<Dim>:GIDS</Dim></span>
        <Drop><Tri d="d" s={5} c="#e0e0e0" /></Drop>
      </Combo>
      <HeadButton $w={25} $corner aria-label="Link"><LinkBadge>1</LinkBadge></HeadButton>
      <HeadCell $w={153}><Price>10635.64948788</Price></HeadCell>
      <HeadCell $w={98}><Small>{"+66.35558162\n+0.63%"}</Small></HeadCell>
      <HeadCell $w={53}><Small>{"B: N/A\nA: N/A"}</Small></HeadCell>
      <HeadButton $w={58} $corner>{c.bold ? <b>{c.agg}</b> : c.agg}</HeadButton>
      <HeadButton $w={49} $corner aria-label="Style"><CandleIcon /></HeadButton>
      <HeadButton $w={49} $corner aria-label="Studies"><Flask /></HeadButton>
      <HeadButton $w={49} $corner aria-label="Patterns"><PatternIcon /></HeadButton>
      <HeadCell />
      <HeadButton $w={49} $corner aria-label="Menu"><ListIcon /></HeadButton>
    </Head>
    <Mid>
      <Center>
        <DrawBar>
          <Draw $w={120} aria-label="Trendline"><LineIcon /></Draw>
          <Draw $w={129} aria-label="Price level"><DollarBox>$</DollarBox></Draw>
          <Draw $w={121} aria-label="Text"><Serif>T</Serif></Draw>
          <Draw $w={121} aria-label="Rectangle">
            <svg width="20" height="15" fill="none" stroke={ICON} strokeWidth="1.5"><rect x="1" y="1" width="18" height="13" /></svg>
          </Draw>
          <Draw $w={219} aria-label="Retracement"><Serif $small>%</Serif></Draw>
          <Draw $w={39} aria-label="Percent chart">{!c.tabs && <PctChart />}</Draw>
        </DrawBar>
        <PlotGrid>
          <Info>
            <InfoCell $bold>{c.title}</InfoCell>
            <InfoCell>D: 1/9/23</InfoCell>
            <InfoCell>O: 10662.1</InfoCell>
            <InfoCell>H: 10807.26</InfoCell>
            <InfoCell>L: 10619.12</InfoCell>
            <InfoCell>C: 10635.65</InfoCell>
            <InfoCell>...</InfoCell>
          </Info>
          <AxisTop><ScaleIcon /></AxisTop>
          <Plot viewBox={`0 0 ${c.w} ${c.h}`} preserveAspectRatio="none">
            <g className="geo" transform={c.geo}>
              {c.grid.map((x) => (
                <path key={x} d={`M${x} 90V1216`} stroke="#484848" strokeDasharray="9 4" />
              ))}
              <Draws shapes={c.shapes} />
            </g>
            {c.extra}
          </Plot>
          <Axis>
            {c.ticks.map(([s, y]) => (
              <text key={s} x="3" y={`${(100 * (y + 5)) / c.h}%`}>{s}</text>
            ))}
            {c.tags.map(([s, y, bg, fg]) => (
              <svg key={s} x="2" y={`${(100 * (y - 11)) / c.h}%`} width="78" height="21">
                <rect x="1" y="1" width="74" height="19" rx="3" fill={bg} />
                <text x="4" y="16" fill={fg}>{s}</text>
              </svg>
            ))}
          </Axis>
        </PlotGrid>
        <TimeAxis>
          {c.times.map(([s, x]) => (
            <text key={`${s}${x}`} x={`${(100 * x) / c.full}%`} y="17">{s}</text>
          ))}
        </TimeAxis>
        <ScrollRow>
          <Tri d="l" c="#707070" />
          <ScrollTrack>
            <ScrollThumb $at={c.thumb[0]} $w={c.thumb[1]} $btn={c.thumbButton}>
              {c.thumbButton ? <ToTop /> : <Grip />}
            </ScrollThumb>
          </ScrollTrack>
          <Mini $w={19} aria-label="Back"><Tri d="l" c="#808080" /></Mini>
          <Mini $w={19} aria-label="Forward"><Tri d="r" c="#808080" /></Mini>
          <Mini $w={25} aria-label="Fit"><Stretch /></Mini>
          <Mini $w={27} aria-label="Crosshair"><Cross /></Mini>
          <Mini $w={29} aria-label="Zoom in"><Zoom plus /></Mini>
          <Mini $w={27} $off={c.thumbButton} aria-label="Zoom out"><Zoom /></Mini>
          <Mini $w={28} aria-label="Draw"><LineIcon /></Mini>
          <SetName>{c.set}</SetName>
        </ScrollRow>
      </Center>
      {c.tabs && (
        <Tabs>
          {tabDefs.map(([s, h]) => (
            <SideTab key={s} $h={h} $on={s === "C"}>{s}</SideTab>
          ))}
          <TabsRest />
        </Tabs>
      )}
    </Mid>
  </Panel>
);

const WatchRow = ({ name, open }: { name: string; open?: boolean }) => (
  <Row>
    <Toggle><Chevron down={open} />Watchlist</Toggle>
    <NameCell>{name}</NameCell>
    <SpinCell>
      <Spin aria-label="Up"><Tri d="u" /></Spin>
      <Spin aria-label="Down"><Tri d="d" /></Spin>
    </SpinCell>
    <LinkCell aria-label="Link"><LinkBadge>1</LinkBadge></LinkCell>
    <BlankCell />
    <MenuCell aria-label="Menu"><ListIcon /></MenuCell>
  </Row>
);

export default function App() {
  return (
    <App_>
      <Global />
      <TopBar>
        <TopItem $green $first>Connected</TopItem>
        <TopItem $green $corner>Realtime data</TopItem>
        <TopItem $corner><Dim>Jan, 9</Dim><Strong>14:14:17</Strong></TopItem>
        <TopItem $corner><span><Dim>Account: </Dim><Strong>*****8044TDA (Luis's Account)</Strong></span></TopItem>
        <Spacer $line="#202020" />
        <TopItem $green><Burst />Home Screen</TopItem>
        <TopItem><Mail />Messages</TopItem>
        <TopItem><Headset />Support</TopItem>
        <TopItem><Chat />Chat Rooms</TopItem>
        <TopItem><Gear />Setup</TopItem>
        <WinButton aria-label="Minimize"><svg width="12" height="12"><path d="M0 9h11" stroke="#777" strokeWidth="3" /></svg></WinButton>
        <WinButton aria-label="Restore">
          <svg width="17" height="14" fill="none" stroke="#777" strokeWidth="1.500"><path d="M5 4V1h11v7h-4M1 5h10v7H1z" /></svg>
        </WinButton>
        <WinButton $close aria-label="Close"><svg width="14" height="14" stroke="#906060" strokeWidth="2.400"><path d="M1 1l12 12M13 1L1 13" /></svg></WinButton>
      </TopBar>
      <Body>
        <Side>
          <Row>
            <AccountToggle><Chevron />Account Info</AccountToggle>
            <MenuCell aria-label="Menu"><ListIcon /></MenuCell>
          </Row>
          <RowGap />
          <Framed>
            <WatchRow name="Activas" open />
            <QuoteWrap>
              <Quotes>
                <thead>
                  <tr>
                    <Th $w={88} $left>Symbol</Th>
                    <Th $w={105}>Last</Th>
                    <Th $w={88}>Net Chng</Th>
                    <Th $w={63}>%Cha...</Th>
                    <Th $w={15} $left aria-label="Columns"><Gear size={13} c="#a8a8a8" /></Th>
                  </tr>
                </thead>
                <tbody>
                  {quotes.map(([sym, marks, last, net, pct, tone]) => (
                    <Tr key={sym} $on={tone === "w"}>
                      <Td $tone={tone as "r"} $left>
                        <Symbol_>{sym}<Marks>{marks.split("").map((k) => <Mark key={k} k={k} />)}</Marks></Symbol_>
                      </Td>
                      <Td $tone={tone === "w" ? "w" : "y"}>{last}</Td>
                      <Td $tone={tone as "r"}>{net}</Td>
                      <Td $tone={tone as "r"}>{pct}</Td>
                      <td />
                    </Tr>
                  ))}
                </tbody>
              </Quotes>
              <Track><Thumb /></Track>
            </QuoteWrap>
            <Frame $side />
          </Framed>
          {lists.map((n, i) => (
            <React.Fragment key={i}>
              <WatchRow name={n} />
              <RowGap />
            </React.Fragment>
          ))}
          <Note>
            <NoteText>Transferir toda la configuración a una cuenta nueva</NoteText>
            <Cursor width="12" height="20" viewBox="0 0 12 20">
              <path d="M1 1v15l3.500-3 2.500 6 2.500-1-2.500-6H12z" fill="#fff" stroke="#000" strokeWidth=".8" />
            </Cursor>
          </Note>
          <Foot>
            <FootCell $w={33} aria-label="Collapse">
              <svg width="12" height="11" fill="#c4c4c4"><path d="M0 0h3v11H0zM12 1v9L5 5.500z" /></svg>
            </FootCell>
            <FootCell $w={31} aria-label="Add">
              <svg width="15" height="15" stroke="#c4c4c4" strokeWidth="4"><path d="M0 7.500h15M7.500 0v15" /></svg>
            </FootCell>
            <FootCell $w={31} aria-label="Settings"><Gear size={19} /></FootCell>
            <FootCell $w={132} aria-label="Actions" />
            <FootCell $w={77} aria-label="Previous"><Tri d="u" s={7} c="#20354a" /></FootCell>
            <FootCell $w={77} aria-label="Next"><Tri d="d" s={7} c="#20354a" /></FootCell>
          </Foot>
        </Side>
        <Splitter>
          <Bar $grow={480}>
            <svg width="3" height="12" stroke="#555" strokeWidth="3" strokeDasharray="1 2"><path d="M1.500 0v12" /></svg>
          </Bar>
          <Bar $grow={75}><Tri d="l" c="#606060" /></Bar>
          <Bar $grow={480}>
            <svg width="3" height="12" stroke="#555" strokeWidth="3" strokeDasharray="1 2"><path d="M1.500 0v12" /></svg>
          </Bar>
        </Splitter>
        <Work>
          <Nav>
            {["Monitor", "Trade", "Analyze", "Scan", "MarketWatch", "Charts", "Tools", "Education", "Help"].map((t) => (
              <Tab key={t} href="#" $on={t === "Charts"}>{t}</Tab>
            ))}
            <Spacer $line="#14283c" />
            <Tab href="#"><OnDemandIcon />OnDemand</Tab>
          </Nav>
          <Tools>
            <ToolTab><Pill $on><BarsIcon />Charts</Pill></ToolTab>
            <ToolTab><Pill><FlexIcon />Flexible Grid</Pill></ToolTab>
            <ToolTab><Pill><DepthIcon />Product Depth</Pill></ToolTab>
            <Spacer />
            <GridName>D,WL,2D,WC</GridName>
            <GridPick $w={80} aria-label="Grid layout"><FourGrid /></GridPick>
            <GridPick $w={47} aria-label="Menu"><ListIcon /></GridPick>
          </Tools>
          <Charts>
            {charts.map((c) => (
              <ChartPanel key={c.title} c={c} />
            ))}
            <Frame />
          </Charts>
        </Work>
      </Body>
    </App_>
  );
}
